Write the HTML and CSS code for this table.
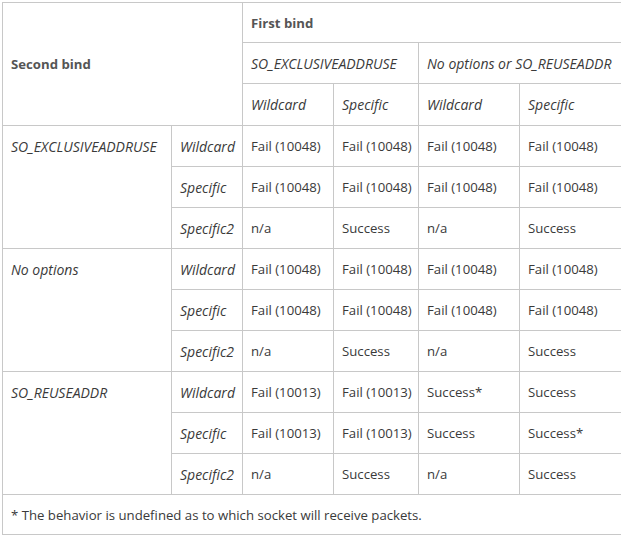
FILE: index.html
```html
<!DOCTYPE html>
<html>
<head>
<meta charset="utf-8">
<link rel="stylesheet" href="styles.css">
</head>
<body>
<div class="wrap">
<table class="bind">
  <colgroup>
    <col class="c1"><col class="c2"><col class="c3"><col class="c4"><col class="c5"><col class="c6">
  </colgroup>
  <thead>
    <tr class="r1">
      <th rowspan="3" colspan="2" class="second">Second bind</th>
      <th colspan="4" class="first">First bind</th>
    </tr>
    <tr>
      <td colspan="2" class="em">SO_EXCLUSIVEADDRUSE</td>
      <td colspan="2" class="em">No options or SO_REUSEADDR</td>
    </tr>
    <tr class="r3">
      <td class="em">Wildcard</td><td class="em">Specific</td><td class="em">Wildcard</td><td class="em">Specific</td>
    </tr>
  </thead>
  <tbody>
    <tr>
      <td rowspan="3" class="em top">SO_EXCLUSIVEADDRUSE</td>
      <td class="em">Wildcard</td><td>Fail (10048)</td><td>Fail (10048)</td><td>Fail (10048)</td><td>Fail (10048)</td>
    </tr>
    <tr><td class="em">Specific</td><td>Fail (10048)</td><td>Fail (10048)</td><td>Fail (10048)</td><td>Fail (10048)</td></tr>
    <tr><td class="em">Specific2</td><td>n/a</td><td>Success</td><td>n/a</td><td>Success</td></tr>
    <tr>
      <td rowspan="3" class="em top">No options</td>
      <td class="em">Wildcard</td><td>Fail (10048)</td><td>Fail (10048)</td><td>Fail (10048)</td><td>Fail (10048)</td>
    </tr>
    <tr><td class="em">Specific</td><td>Fail (10048)</td><td>Fail (10048)</td><td>Fail (10048)</td><td>Fail (10048)</td></tr>
    <tr><td class="em">Specific2</td><td>n/a</td><td>Success</td><td>n/a</td><td>Success</td></tr>
    <tr>
      <td rowspan="3" class="em top">SO_REUSEADDR</td>
      <td class="em">Wildcard</td><td>Fail (10013)</td><td>Fail (10013)</td><td>Success*</td><td>Success</td>
    </tr>
    <tr><td class="em">Specific</td><td>Fail (10013)</td><td>Fail (10013)</td><td>Success</td><td>Success*</td></tr>
    <tr><td class="em">Specific2</td><td>n/a</td><td>Success</td><td>n/a</td><td>Success</td></tr>
    <tr class="foot"><td colspan="6" class="note">* The behavior is undefined as to which socket will receive packets.</td></tr>
  </tbody>
</table>
</div>
</body>
</html>
```
FILE: styles.css
```css
html, body {
  margin: 0;
  padding: 0;
  background: #fff;
  overflow: hidden;
}
.wrap {
  width: 621px;
  height: 537px;
  overflow: hidden;
  padding: 2px 0 0 2px;
  box-sizing: border-box;
}
.bind {
  border-collapse: collapse;
  table-layout: fixed;
  width: 630px;
  font-family: "Open Sans", sans-serif;
  font-size: 13.2px;
  color: #3a3a3a;
}
.c1 { width: 169px; }
.c2 { width: 71px; }
.c3 { width: 91px; }
.c4 { width: 85px; }
.c5 { width: 101px; }
.c6 { width: 113px; }
.bind th, .bind td {
  border: 1px solid #c8c8c8;
  padding: 0 8px;
  height: 41px;
  text-align: left;
  vertical-align: middle;
  white-space: nowrap;
  box-sizing: border-box;
  font-weight: normal;
}
.bind .r1 td, .bind .r1 th.first { height: 40px; }
.bind .r3 td { height: 42px; }
.bind .foot td { height: 40px; }
.bind th {
  font-weight: bold;
  color: #555;
}
.bind .em {
  font-style: italic;
  font-size: 14px;
}
.bind td.top {
  vertical-align: top;
  padding-top: 11px;
}
```
